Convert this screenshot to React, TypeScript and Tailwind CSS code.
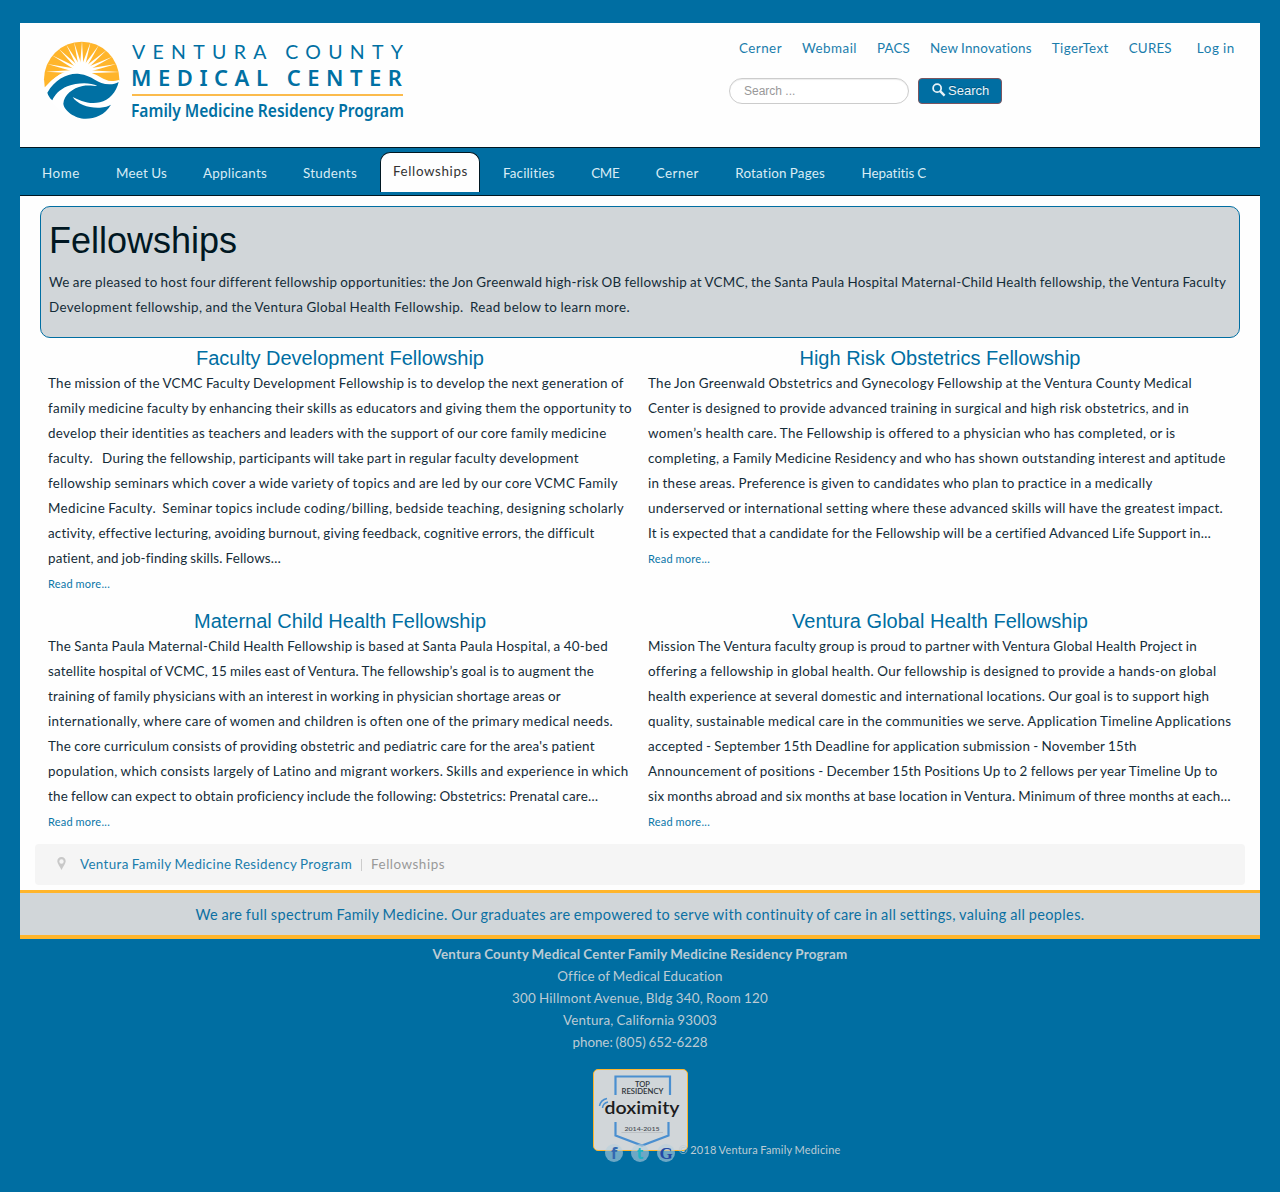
import { useLayoutEffect, useRef } from "react";

/* One line of text whose tracking is adjusted so that it fills the given measure. */
function Fit({ text, w, className = "" }: { text: string; w: number; className?: string }) {
  const ref = useRef<HTMLSpanElement>(null);
  useLayoutEffect(() => {
    const el = ref.current;
    if (!el) return;
    el.style.letterSpacing = "0px";
    const natural = el.getBoundingClientRect().width;
    const gap = (w - natural) / text.length;
    el.style.letterSpacing = `${gap}px`;
  }, [text, w]);
  return (
    <span ref={ref} className={`inline-block whitespace-pre ${className}`}>
      {text}
    </span>
  );
}

type Line = [string, number];

const topLinks: Line[] = [
  ["Cerner", 43],
  ["Webmail", 55],
  ["PACS", 33],
  ["New Innovations", 102],
  ["TigerText", 57],
  ["CURES", 43],
];

const navLeft: Line[] = [
  ["Home", 38],
  ["Meet Us", 51],
  ["Applicants", 64],
  ["Students", 54],
];
const navRight: Line[] = [
  ["Facilities", 52],
  ["CME", 28],
  ["Cerner", 43],
  ["Rotation Pages", 90],
  ["Hepatitis C", 65],
];

const articles: { title: string; w: number; lines: Line[] }[] = [
  {
    title: "Faculty Development Fellowship",
    w: 288,
    lines: [
      ["The mission of the VCMC Faculty Development Fellowship is to develop the next generation of", 576],
      ["family medicine faculty by enhancing their skills as educators and giving them the opportunity to", 584],
      ["develop their identities as teachers and leaders with the support of our core family medicine", 559],
      ["faculty.   During the fellowship, participants will take part in regular faculty development", 531],
      ["fellowship seminars which cover a wide variety of topics and are led by our core VCMC Family", 570],
      ["Medicine Faculty.  Seminar topics include coding/billing, bedside teaching, designing scholarly", 576],
      ["activity, effective lecturing, avoiding burnout, giving feedback, cognitive errors, the difficult", 546],
      ["patient, and job-finding skills. Fellows…", 233],
    ],
  },
  {
    title: "High Risk Obstetrics Fellowship",
    w: 281,
    lines: [
      ["The Jon Greenwald Obstetrics and Gynecology Fellowship at the Ventura County Medical", 544],
      ["Center is designed to provide advanced training in surgical and high risk obstetrics, and in", 541],
      ["women’s health care. The Fellowship is offered to a physician who has completed, or is", 527],
      ["completing, a Family Medicine Residency and who has shown outstanding interest and aptitude", 578],
      ["in these areas. Preference is given to candidates who plan to practice in a medically", 505],
      ["underserved or international setting where these advanced skills will have the greatest impact.", 575],
      ["It is expected that a candidate for the Fellowship will be a certified Advanced Life Support in…", 563],
    ],
  },
  {
    title: "Maternal Child Health Fellowship",
    w: 292,
    lines: [
      ["The Santa Paula Maternal-Child Health Fellowship is based at Santa Paula Hospital, a 40-bed", 560],
      ["satellite hospital of VCMC, 15 miles east of Ventura. The fellowship’s goal is to augment the", 546],
      ["training of family physicians with an interest in working in physician shortage areas or", 513],
      ["internationally, where care of women and children is often one of the primary medical needs.", 565],
      ["The core curriculum consists of providing obstetric and pediatric care for the area's patient", 547],
      ["population, which consists largely of Latino and migrant workers. Skills and experience in which", 581],
      ["the fellow can expect to obtain proficiency include the following: Obstetrics: Prenatal care…", 550],
    ],
  },
  {
    title: "Ventura Global Health Fellowship",
    w: 296,
    lines: [
      ["Mission The Ventura faculty group is proud to partner with Ventura Global Health Project in", 549],
      ["offering a fellowship in global health. Our fellowship is designed to provide a hands-on global", 568],
      ["health experience at several domestic and international locations. Our goal is to support high", 562],
      ["quality, sustainable medical care in the communities we serve. Application Timeline Applications", 584],
      ["accepted - September 15th Deadline for application submission - November 15th", 489],
      ["Announcement of positions - December 15th Positions Up to 2 fellows per year Timeline Up to", 570],
      ["six months abroad and six months at base location in Ventura. Minimum of three months at each…", 583],
    ],
  },
];

const rays = [
  [18, 107], [22, 84], [36, 58], [56, 38], [78, 25], [102, 18],
  [126, 15], [152, 18], [177, 27], [200, 42], [217, 62], [229, 84], [240, 108],
];

function Sunburst() {
  return (
    <g>
      <clipPath id="disc">
        <circle cx="125" cy="130" r="113" />
      </clipPath>
      <g clipPath="url(#disc)">
        <path d="M0 0H255V131Q215 142 190 128Q120 85 60 115Q30 135 8 160Z" fill="#ffb52b" />
        <circle cx="125" cy="106" r="27" fill="#fff" />
        {rays.map(([x, y]) => {
          const dx = x - 125;
          const dy = y - 107;
          const l = Math.hypot(dx, dy);
          const px = (-dy / l) * 4.8;
          const py = (dx / l) * 4.8;
          const bx = 125 + (dx / l) * 22;
          const by = 107 + (dy / l) * 22;
          return <path key={x} d={`M${bx + px} ${by + py}L${x} ${y}L${bx - px} ${by - py}Z`} fill="#fff" />;
        })}
        <path d="M8 168Q40 112 100 102Q150 106 180 128Q210 142 245 130V260H0Z" fill="#fff" />
      </g>
      <path
        d="M22 170C45 130 85 110 118 114C158 118 172 145 208 145C220 145 228 142 236 138C229 170 207 192 180 199C145 207 118 192 98 183C112 205 148 217 180 215C194 214 206 210 213 206C195 237 165 248 137 248C105 248 72 224 70 203C72 178 98 155 128 150C145 147 160 150 172 150C150 138 110 140 82 151C58 161 43 178 37 193C29 186 25 179 22 170Z"
        fill="#0070a3"
      />
    </g>
  );
}

function Logo() {
  return (
    <svg width="390" height="100" viewBox="0 0 390 100" className="block overflow-visible" fill="#0070a3" fontFamily="'Noto Sans', sans-serif">
      <g transform="scale(.3333)">
        <Sunburst />
      </g>
      <text x="92" y="23" fontSize="19.5" textLength="271" lengthAdjust="spacing" fontFamily="Lato, sans-serif" style={{ letterSpacing: 0 }}>VENTURA COUNTY</text>
      <text x="91" y="50" fontSize="22" fontWeight="600" textLength="271">MEDICAL CENTER</text>
      <rect x="92" y="58" width="271" height="2" fill="#fbbb4c" />
      <text x="91" y="81" fontSize="17.5" fontWeight="600" textLength="273" lengthAdjust="spacingAndGlyphs">
        Family Medicine Residency Program
      </text>
    </svg>
  );
}

function Badge() {
  return (
    <svg width="95" height="82" viewBox="0 0 95 82" className="block" fontFamily="Lato, sans-serif" textAnchor="middle">
      <rect x=".5" y=".5" width="94" height="81" rx="4.5" fill="#d1d6d9" stroke="#ffb52b" />
      <path d="M22.5 26V7.5H77V26M22.5 53V66.500L49 76.500L75.500 66.500V53" fill="none" stroke="#4a8fd0" strokeWidth="2.2" />
      <path d="M28.500 63.500H70" stroke="#b3b8bc" strokeWidth=".7" />
      <path d="M6.500 37Q7.500 31 14 29.500M9.500 39Q10 34 15 33" fill="none" stroke="#4a8fd0" strokeWidth="1.5" />
      <text x="49.500" y="17.500" fontSize="6.800" fontWeight="600" fill="#2c3338" textLength="15" lengthAdjust="spacingAndGlyphs">TOP</text>
      <text x="49.500" y="25" fontSize="6.800" fontWeight="600" fill="#2c3338" textLength="42" lengthAdjust="spacingAndGlyphs">RESIDENCY</text>
      <text x="49" y="45" fontSize="18" fontWeight="600" fill="#1c1c1e" textLength="75" lengthAdjust="spacingAndGlyphs">doximity</text>
      <text x="49" y="62" fontSize="6.500" fontWeight="600" fill="#4a5056" textLength="35" lengthAdjust="spacingAndGlyphs">2014-2015</text>
    </svg>
  );
}

function Social() {
  const discs = [
    { x: 9, t: "f", c: "#3468b0" },
    { x: 35, t: "t", c: "#22b3c4" },
    { x: 61, t: "G", c: "#2348a4" },
  ];
  return (
    <svg width="70" height="26" viewBox="0 0 70 26" className="overflow-visible" textAnchor="middle" fontWeight="700">
      {discs.map((d) => (
        <g key={d.t}>
          <circle cx={d.x} cy="10" r="9" fill="#b6cfdc" opacity=".6" />
          <text
            x={d.x}
            y="15.500"
            fontSize={d.t === "G" ? 17 : 16}
            fill={d.c}
            fontFamily={d.t === "G" ? "'Liberation Serif', serif" : "'Noto Sans', sans-serif"}
          >
            {d.t}
          </text>
        </g>
      ))}
    </svg>
  );
}

export default function App() {
  return (
    <div className="h-[1192px] bg-[#006ea2] px-5 pt-[23px] font-[Lato,sans-serif] text-[13.4px] text-[#142c38] [word-spacing:-0.6px]">
      <header className="flex h-[124px] justify-between bg-[#fefefe] pr-[25px] pl-5">
        <div className="pt-[13px] [word-spacing:0px]">
          <Logo />
        </div>
        <div className="w-[506px] pt-[15px]">
          <div className="flex h-5 items-center gap-5 pl-[10px] leading-5 text-[#1a7dac]">
            {topLinks.map(([t, w]) => (
              <Fit key={t} text={t} w={w} />
            ))}
            <Fit text="Log in" w={38} className="ml-[5px]" />
          </div>
          <div className="mt-5 flex gap-[9px] font-['Liberation_Sans',sans-serif] [word-spacing:0px]">
            <div className="h-[26px] w-[180px] rounded-full border border-[#ccc] bg-white pl-[14px] text-xs leading-6 text-[#999] shadow-[inset_0_1px_1px_rgba(0,0,0,.075)]">
              Search ...
            </div>
            <div className="flex h-[26px] w-[84px] rounded border border-[#7c5560] bg-[#006ea2] pl-[13px] text-[13px] leading-[23px] text-[#e8f3f8] [text-shadow:0_-1px_0_rgba(0,0,0,.25)]">
              <svg width="14" height="14" viewBox="0 0 15 15" className="mt-[4px] mr-[2px]" fill="none" stroke="#e8f3f8">
                <circle cx="5.500" cy="5.500" r="4.3" strokeWidth="1.9" />
                <path d="M8.500 8.500L13.500 13.500" strokeWidth="2.600" />
              </svg>
              Search
            </div>
          </div>
        </div>
      </header>

      <nav className="flex h-[49px] border-y border-[#001722] pl-[22px] leading-[50px] text-[#d9ecf5]">
        <div className="flex gap-[36px]">
          {navLeft.map(([t, w]) => (
            <Fit key={t} text={t} w={w} />
          ))}
        </div>
        <div className="mt-1 ml-[23px] h-10 w-[100px] rounded-t-[10px] border border-b-0 border-[#001722] bg-[#fefefe] pl-3 leading-[37px] text-[#333]">
          <Fit text="Fellowships" w={75} />
        </div>
        <div className="ml-[23px] flex gap-[36.500px]">
          {navRight.map(([t, w]) => (
            <Fit key={t} text={t} w={w} />
          ))}
        </div>
      </nav>

      <main className="h-[694px] bg-[#fefefe] px-[15px] pt-[10px]">
        <section className="mx-[5px] h-[132px] rounded-[10px] border border-[#006ea2] bg-[#d1d6d9] px-2 pt-[14px]">
          <h1 className="font-['Liberation_Sans',sans-serif] text-[36px] leading-10 text-[#001722]">Fellowships</h1>
          <div className="mt-[9px] leading-[25px]">
            <Fit
              text="We are pleased to host four different fellowship opportunities: the Jon Greenwald high-risk OB fellowship at VCMC, the Santa Paula Hospital Maternal-Child Health fellowship, the Ventura Faculty"
              w={1177}
              className="block w-fit"
            />
            <Fit
              text="Development fellowship, and the Ventura Global Health Fellowship.  Read below to learn more."
              w={581}
              className="block w-fit"
            />
          </div>
        </section>

        <div className="mx-[5px] mt-2 grid grid-cols-2 grid-rows-[263px_225px]">
          {articles.map((a) => (
            <article key={a.title} className="px-2">
              <h2 className="h-[25px] text-center font-['Liberation_Sans',sans-serif] text-xl leading-[25px] text-[#006ea2] [word-spacing:0px]">
                <Fit text={a.title} w={a.w} />
              </h2>
              {a.lines.map(([t, w]) => (
                <div key={t} className="h-[25px] leading-[25px]">
                  <Fit text={t} w={w} />
                </div>
              ))}
              <div className="h-[25px] text-[11px] leading-[26px] text-[#0b76a8]">
                <Fit text="Read more..." w={62} />
              </div>
            </article>
          ))}
        </div>

        <div className="mt-[10px] flex h-[41px] items-center rounded bg-[#f5f5f5] pl-[22px] text-[#999]">
          <svg width="9" height="13" viewBox="0 0 9 13" className="mr-[14px] -mt-[2px]">
            <path fillRule="evenodd" d="M4.500 0C2 0 .3 1.900.3 4.200C.3 6.500 3 9.500 4.500 13C6 9.500 8.700 6.500 8.700 4.200C8.700 1.900 7 0 4.500 0ZM4.500 2.300A2.200 2.200 0 1 1 4.500 6.700A2.200 2.200 0 1 1 4.500 2.300Z" fill="#c8c8c8" />
          </svg>
          <Fit text="Ventura Family Medicine Residency Program" w={272} className="text-[#1a7dac]" />
          <span className="mx-[9px] h-3 w-px bg-[#ccc]" />
          <Fit text="Fellowships" w={74} />
        </div>
      </main>

      <div className="h-[49px] border-t-[3px] border-b-4 border-[#ffb52b] bg-[#d1d6d9] text-center text-[14.500px] leading-[43px] text-[#0b70a2]">
        <Fit
          text="We are full spectrum Family Medicine. Our graduates are empowered to serve with continuity of care in all settings, valuing all peoples."
          w={889}
        />
      </div>

      <footer className="pt-1 text-center leading-[22px] text-[#bccbd4]">
        <div className="h-[22px] font-bold"><Fit text="Ventura County Medical Center Family Medicine Residency Program" w={415} /></div>
        <div className="h-[22px]"><Fit text="Office of Medical Education" w={165} /></div>
        <div className="h-[22px]"><Fit text="300 Hillmont Avenue, Bldg 340, Room 120" w={256} /></div>
        <div className="h-[22px]"><Fit text="Ventura, California 93003" w={154} /></div>
        <div className="h-[22px]"><Fit text="phone: (805) 652-6228" w={135} /></div>
        <div className="relative mx-auto mt-4 h-[82px] w-[95px] text-left">
          <Badge />
          <div className="absolute top-[74px] left-[12px] flex w-[260px] items-start">
            <Social />
            <Fit text="© 2018 Ventura Family Medicine" w={162} className="-mt-[4px] ml-[4px] text-[11px]" />
          </div>
        </div>
      </footer>
    </div>
  );
}
